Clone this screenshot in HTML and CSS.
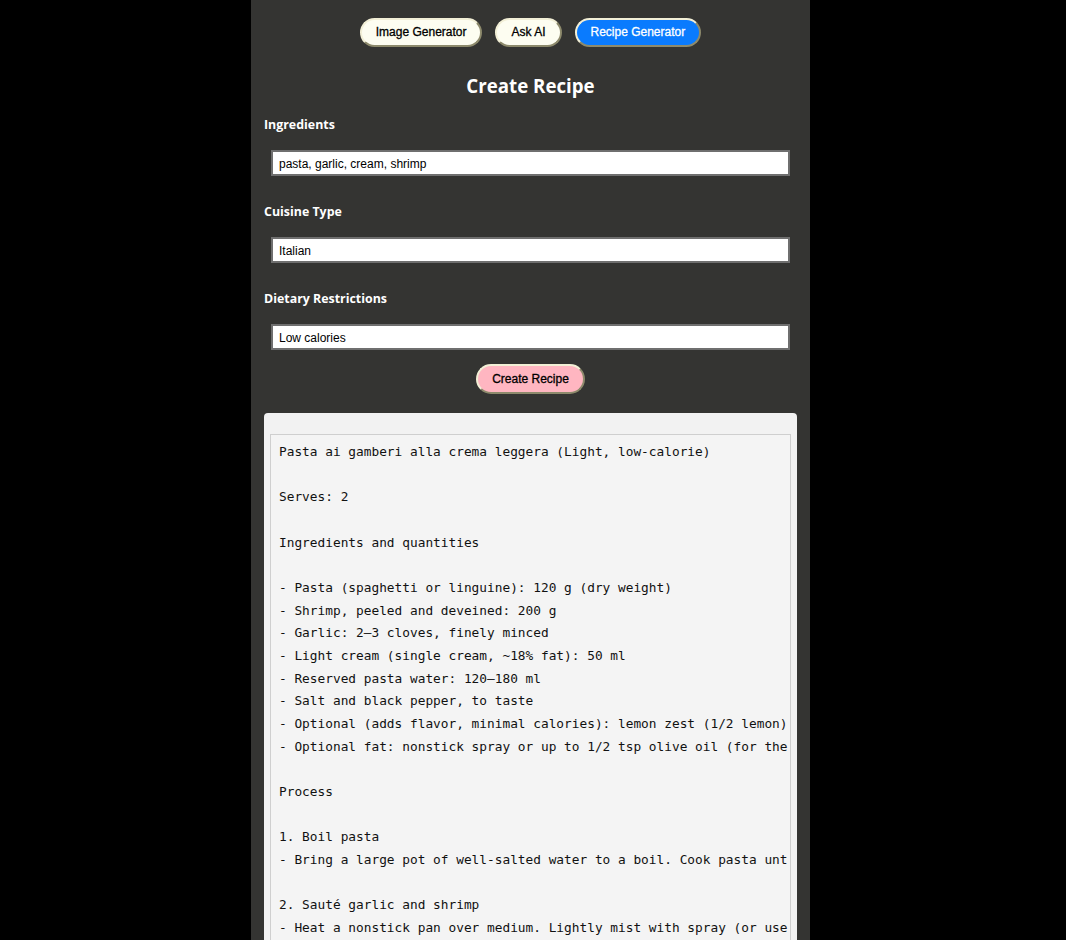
FILE: index.html
```html
<!DOCTYPE html>
<html lang="en">
<head>
<meta charset="utf-8">
<title>Recipe Generator</title>
<link rel="stylesheet" href="styles.css">
</head>
<body>
<div class="page">
  <main class="app">
    <nav class="tabs">
      <button class="tab">Image Generator</button>
      <button class="tab">Ask AI</button>
      <button class="tab tab-active">Recipe Generator</button>
    </nav>
    <h2 class="title">Create Recipe</h2>
    <form class="form">
      <label class="field-label first">Ingredients</label>
      <input class="field-input" type="text" value="pasta, garlic, cream, shrimp">
      <label class="field-label">Cuisine Type</label>
      <input class="field-input" type="text" value="Italian">
      <label class="field-label">Dietary Restrictions</label>
      <input class="field-input" type="text" value="Low calories">
      <div class="submit-row"><button type="button" class="submit">Create Recipe</button></div>
    </form>
    <section class="result">
<pre class="recipe">Pasta ai gamberi alla crema leggera (Light, low-calorie)

Serves: 2

Ingredients and quantities

- Pasta (spaghetti or linguine): 120 g (dry weight)
- Shrimp, peeled and deveined: 200 g
- Garlic: 2–3 cloves, finely minced
- Light cream (single cream, ~18% fat): 50 ml
- Reserved pasta water: 120–180 ml
- Salt and black pepper, to taste
- Optional (adds flavor, minimal calories): lemon zest (1/2 lemon)
- Optional fat: nonstick spray or up to 1/2 tsp olive oil (for the

Process

1. Boil pasta
- Bring a large pot of well-salted water to a boil. Cook pasta unt

2. Sauté garlic and shrimp
- Heat a nonstick pan over medium. Lightly mist with spray (or use
- Add shrimp, season with salt and pepper, and cook 1–2 minutes

3. Make the light cream sauce
- Lower heat. Add cream and a splash of pasta water; simmer gently
</pre>
    </section>
  </main>
</div>
</body>
</html>
```

FILE: styles.css
```css
html, body {
  margin: 0;
  padding: 0;
  background: #000;
}

.page {
  display: flex;
  justify-content: center;
  padding-right: 5px;
  min-height: 100vh;
}

.app {
  width: 559px;
  box-sizing: border-box;
  background: #343432;
  padding: 18px 13px 0;
  display: flex;
  flex-direction: column;
  overflow: hidden;
}

.tabs {
  display: flex;
  justify-content: center;
  gap: 13px;
}

.tab {
  font-family: "Liberation Sans", Arial, sans-serif;
  font-size: 12px;
  line-height: 15px;
  padding: 5px 14px;
  border-radius: 15px;
  border: 2px solid;
  border-color: #f2efd6 #8d8a6c #8d8a6c #f2efd6;
  background: #fdfdf1;
  color: #000;
  -webkit-text-stroke: 0.3px currentColor;
  cursor: pointer;
}

.tab-active {
  background: #0a7bfe;
  color: #fff;
}

.title {
  margin: 25px 0 0;
  text-align: center;
  color: #fff;
  font-family: "Open Sans", sans-serif;
  font-weight: 700;
  font-size: 18.7px;
  line-height: 27px;
}

.form {
  display: flex;
  flex-direction: column;
}

.field-label {
  display: block;
  margin-top: 27px;
  color: #fff;
  font-family: "Open Sans", sans-serif;
  font-weight: 700;
  font-size: 12.4px;
  line-height: 18px;
}

.field-label.first {
  margin-top: 17px;
}

.field-input {
  display: block;
  box-sizing: border-box;
  margin: 16px 7px 0;
  width: calc(100% - 14px);
  height: 26px;
  padding: 5px 6px 3px;
  border: 2px solid #6f6f6f;
  background: #fff;
  font-family: "Liberation Sans", Arial, sans-serif;
  font-size: 12px;
  line-height: 14px;
  color: #000;
  outline: none;
}

.submit-row {
  display: flex;
  justify-content: center;
  margin-top: 14px;
}

.submit {
  font-family: "Liberation Sans", Arial, sans-serif;
  font-size: 12px;
  line-height: 16px;
  padding: 5px 14px;
  border-radius: 15px;
  border: 2px solid;
  border-color: #f2efd6 #8d8a6c #8d8a6c #f2efd6;
  background: #ffb6c1;
  color: #000;
  -webkit-text-stroke: 0.3px currentColor;
  cursor: pointer;
}

.result {
  margin-top: 19px;
  background: #f2f2f2;
  border-radius: 4px;
  padding: 21px 6px 0;
}

.recipe {
  margin: 0;
  background: #f4f4f4;
  border: 1px solid #cfcfcf;
  border-bottom: none;
  padding: 6px 0 0 8px;
  overflow: hidden;
  white-space: pre;
  font-family: "DejaVu Sans Mono", monospace;
  font-size: 12.8px;
  line-height: 22.65px;
  color: #111;
}
```
